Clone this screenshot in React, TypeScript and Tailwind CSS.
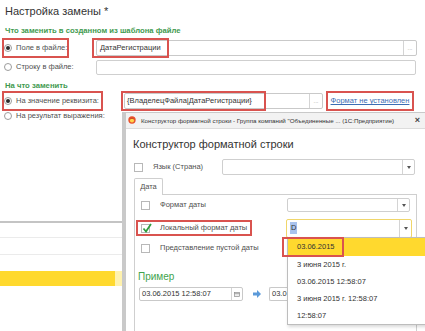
import type { ReactNode } from 'react'

function Radio({ on }: { on?: boolean }) {
  return (
    <span className="flex h-[8px] w-[8px] shrink-0 items-center justify-center rounded-full border border-[#9c9c9c] bg-white">
      {on && <span className="h-[4px] w-[4px] rounded-full bg-[#2b2b2b]" />}
    </span>
  )
}

function Check({ on }: { on?: boolean }) {
  return (
    <span className="relative flex h-[9px] w-[9px] shrink-0 border border-[#b8b8b8] bg-white">
      {on && (
        <svg viewBox="0 0 10 10" className="absolute -top-[2px] left-0 h-[10px] w-[10px]">
          <path d="M1.5 5.5 L4 8.5 L9 1" fill="none" stroke="#2f9e3f" strokeWidth="1.7" />
        </svg>
      )}
    </span>
  )
}

function DropBtn() {
  return (
    <span className="flex w-[12px] shrink-0 items-center justify-center border-l border-[#d4d4d4]">
      <svg viewBox="0 0 4 3" className="h-[3px] w-[4px]">
        <path d="M0 0 H4 L2 3 Z" fill="#555" />
      </svg>
    </span>
  )
}

function Select({ className, children }: { className: string; children?: ReactNode }) {
  return (
    <div className={`flex rounded-[2px] border bg-white ${className}`}>
      <div className="flex flex-1 items-center pl-[3px]">{children}</div>
      <DropBtn />
    </div>
  )
}

const red = 'border-2 border-[#d9534f]'

export default function App() {
  return (
    <div className="relative h-[331px] w-[425px] overflow-hidden whitespace-nowrap bg-white font-['Liberation_Sans',Arial,sans-serif] text-[7.5px] text-[#4f4f4f]">
      {/* form behind the dialog */}
      <div className="pl-[5px] pt-[3px]">
        <h1 className="text-[11px] leading-[16px] text-[#333]">Настройка замены *</h1>
      </div>
      <div className="mt-[7px] pl-[5px] text-[7.7px] font-bold leading-[10px] text-[#3f9a4f]">Что заменить в созданном из шаблона файле</div>

      <div className="mt-[2px] flex h-[20px] items-center pl-[2px] pr-[8px]">
        <div className={`flex h-[20px] w-[67px] items-center gap-[4px] ${red}`}>
          <Radio on />
          <span>Поле в файле:</span>
        </div>
        <div className="relative ml-[27px] flex h-[16px] flex-1 rounded-[2px] border border-[#c9c9c9]">
          <div className="flex flex-1 items-center pl-[3px] text-[#333]">ДатаРегистрации</div>
          <span className="flex w-[13px] items-center justify-center border-l border-[#d4d4d4] text-[6px] text-[#999]">...</span>
          <div className={`absolute -left-[5px] -top-[3px] h-[20px] w-[77px] ${red}`} />
        </div>
      </div>

      <div className="flex h-[18px] items-center pl-[4px] pr-[9px]">
        <div className="flex w-[92px] items-center gap-[4px]">
          <Radio />
          <span>Строку в файле:</span>
        </div>
        <div className="h-[15px] flex-1 rounded-[2px] border border-[#cfcfcf]" />
      </div>

      <div className="mt-[5px] pl-[5px] text-[7.7px] font-bold leading-[10px] text-[#3f9a4f]">На что заменить</div>

      <div className="flex h-[20px] items-center pl-[2px]">
        <div className={`flex h-[20px] w-[101px] items-center gap-[4px] ${red}`}>
          <Radio on />
          <span>На значение реквизита:</span>
        </div>
        <div className="relative ml-[21px] flex h-[16px] w-[199px] rounded-[2px] border border-[#c9c9c9]">
          <div className="flex flex-1 items-center pl-[2px] text-[#333]">{'{ВладелецФайла|ДатаРегистрации}'}</div>
          <span className="flex w-[13px] items-center justify-center border-l border-[#d4d4d4] text-[6px] text-[#999]">...</span>
          <div className={`absolute -left-[4px] -top-[3px] h-[20px] w-[145px] ${red}`} />
        </div>
        <div className={`ml-[3px] flex h-[20px] w-[88px] items-center justify-center ${red}`}>
          <span className="text-[7.5px] text-[#3b6db3] underline">Формат не установлен</span>
        </div>
      </div>

      <div className="flex h-[10px] items-center gap-[4px] pl-[4px]">
        <Radio />
        <span>На результат выражения:</span>
      </div>

      {/* list behind the dialog */}
      <div className="mt-[100px] h-[2px] w-[122px] bg-[#c4c4c4]" />
      <div className="mt-[14px] h-px w-[122px] bg-[#ebebeb]" />
      <div className="mt-[16px] h-px w-[122px] bg-[#ebebeb]" />
      <div className="mt-[16px] flex h-[15px] w-[122px]">
        <div className="w-[115px] bg-[#ffd92e]" />
        <div className="flex-1 bg-[#fff2ae]" />
      </div>

      {/* dialog window */}
      <div className="absolute left-[122px] top-[112px] flex h-[225px] w-[310px] flex-col border-l-[4px] border-t border-[#c9c9c9] bg-white">
        <div className="flex h-[16px] items-center justify-between border-b border-[#dcdcdc] bg-[#f2f2f2] pl-[2px] pr-[12px]">
          <div className="flex items-center gap-[5px]">
            <svg viewBox="0 0 10 10" className="h-[8px] w-[8px]">
              <circle cx="5" cy="5" r="4.6" fill="#e8502c" />
              <circle cx="5" cy="5.6" r="2.6" fill="#ffd54a" />
              <path d="M3 3.6 Q5 2 7 3.6" stroke="#b0301a" strokeWidth="0.8" fill="none" />
            </svg>
            <span className="text-[6.2px] text-[#333]">Конструктор форматной строки - Группа компаний "Объединенные ... (1С:Предприятие)</span>
          </div>
          <span className="text-[9px] font-bold leading-none text-[#444]">×</span>
        </div>

        <div className="flex flex-1 flex-col pl-[7px]">
          <div className="mt-[7px] text-[11px] leading-[16px] text-[#333]">Конструктор форматной строки</div>

          <div className="mt-[7px] flex h-[16px] items-center pl-[1px]">
            <Check />
            <span className="ml-[10px] w-[69px]">Язык (Страна)</span>
            <Select className="h-[16px] w-[193px] border-[#cfcfcf]" />
          </div>

          <div className="mt-[3px] flex">
            <div className="relative z-10 -mb-px ml-[1px] flex h-[17px] w-[29px] items-center justify-center rounded-t-[2px] border border-b-0 border-[#cfcfcf] bg-white">Дата</div>
          </div>
          <div className="ml-[1px] w-[283px] flex-1 border border-[#cfcfcf]">
            <div className="mt-[3px] flex h-[14px] items-center pl-[6px]">
              <Check />
              <span className="ml-[10px] w-[127px]">Формат даты</span>
              <Select className="h-[14px] w-[123px] border-[#cfcfcf]" />
            </div>

            <div className="mt-[6px] flex h-[20px] items-center pl-[1px]">
              <div className={`flex h-[16px] w-[116px] items-center pl-[3px] ${red}`}>
                <Check on />
                <span className="ml-[10px]">Локальный формат даты</span>
              </div>
              <Select className="ml-[34px] h-[19px] w-[126px] border-[#f0d66a]">
                <span className="bg-[#a9c3ee] px-px text-[#333]">D</span>
              </Select>
            </div>

            <div className="mt-[3px] flex h-[14px] items-center pl-[6px]">
              <Check />
              <span className="ml-[10px]">Представление пустой даты</span>
            </div>

            <div className="mt-[15px] pl-[3px] text-[10px] leading-[14px] text-[#3fa34d]">Пример</div>

            <div className="mt-[3px] flex h-[14px] items-center pl-[4px]">
              <div className="flex h-[14px] w-[104px] rounded-[2px] border border-[#c9c9c9]">
                <div className="flex flex-1 items-center pl-[2px] text-[#333]">03.06.2015 12:58:07</div>
                <span className="flex w-[11px] items-center justify-center border-l border-[#d4d4d4]">
                  <svg viewBox="0 0 7 6" className="h-[5px] w-[6px]">
                    <rect x="0.5" y="0.5" width="6" height="5" fill="#eee" stroke="#888" strokeWidth="0.8" />
                    <line x1="0.5" y1="2" x2="6.5" y2="2" stroke="#888" strokeWidth="0.8" />
                  </svg>
                </span>
              </div>
              <svg viewBox="0 0 8 8" className="ml-[10px] h-[8px] w-[8px]">
                <path d="M0 2.5 H4 V0 L8 4 L4 8 V5.5 H0 Z" fill="#5b9ad9" />
              </svg>
              <div className="ml-[8px] flex h-[14px] w-[18px] items-center overflow-hidden rounded-l-[2px] border border-r-0 border-[#c9c9c9] pl-[2px] text-[#333]">03.0</div>
            </div>
          </div>
        </div>
      </div>

      {/* open drop-down list */}
      <div className="absolute left-[287px] top-[237px] h-[88px] w-[145px] border border-[#bdbdbd] bg-white text-[7.5px] text-[#333] shadow-[1px_2px_3px_rgba(0,0,0,0.15)]">
        <div className="relative flex h-[18px] items-center bg-[#ffd92e] pl-[9px]">
          03.06.2015
          <div className={`absolute -left-[6px] -top-px h-[20px] w-[62px] ${red}`} />
        </div>
        <div className="flex h-[17px] items-center pl-[9px]">3 июня 2015 г.</div>
        <div className="flex h-[17px] items-center pl-[9px]">03.06.2015 12:58:07</div>
        <div className="flex h-[17px] items-center pl-[9px]">3 июня 2015 г. 12:58:07</div>
        <div className="flex h-[17px] items-center pl-[9px]">12:58:07</div>
      </div>
    </div>
  )
}
